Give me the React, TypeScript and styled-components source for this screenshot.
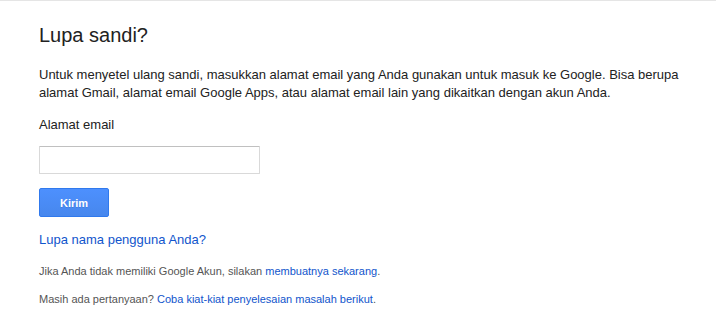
import React from "react";
import styled, { createGlobalStyle } from "styled-components";

const Global = createGlobalStyle`
  html, body { margin: 0; padding: 0; background: #fff; }
  body { font-family: Arial, "Liberation Sans", sans-serif; color: #222; }
`;

const Page = styled.div`
  border-top: 1px solid #e5e5e5;
  padding: 23px 0 0 39px;
  min-height: 334px;
  box-sizing: border-box;
`;

const Title = styled.h1`
  margin: 0;
  font-size: 20px;
  line-height: 23px;
  font-weight: normal;
  color: #222;
`;

const Lead = styled.p`
  margin: 19px 0 0;
  width: 650px;
  font-size: 13px;
  line-height: 18px;
  color: #222;
`;

const Label = styled.label`
  display: block;
  margin-top: 14px;
  font-size: 13px;
  line-height: 18px;
  color: #222;
`;

const Input = styled.input`
  display: block;
  box-sizing: border-box;
  margin-top: 12px;
  width: 221px;
  height: 28px;
  padding: 0 8px;
  border: 1px solid #d9d9d9;
  border-top-color: #c0c0c0;
  border-radius: 1px;
  font-size: 13px;
  font-family: inherit;
  outline: none;
`;

const Button = styled.button`
  display: block;
  box-sizing: border-box;
  margin-top: 14px;
  width: 70px;
  height: 29px;
  border: 1px solid #3079ed;
  border-radius: 2px;
  background: linear-gradient(#4d90fe, #4787ed);
  color: #fff;
  font-family: inherit;
  font-size: 11px;
  font-weight: bold;
  text-shadow: 0 1px rgba(0, 0, 0, 0.1);
  cursor: pointer;
`;

const BigLink = styled.a`
  display: block;
  margin-top: 14px;
  font-size: 13px;
  line-height: 18px;
  color: #15c;
  text-decoration: none;
`;

const Note = styled.p<{ $top: number }>`
  margin: ${(p) => p.$top}px 0 0;
  font-size: 11px;
  line-height: 15px;
  color: #555;
`;

const Link = styled.a`
  color: #15c;
  text-decoration: none;
`;

export default function App() {
  return (
    <>
      <Global />
      <Page>
        <Title>Lupa sandi?</Title>
        <Lead>
          Untuk menyetel ulang sandi, masukkan alamat email yang Anda gunakan untuk masuk ke Google. Bisa berupa
          alamat Gmail, alamat email Google Apps, atau alamat email lain yang dikaitkan dengan akun Anda.
        </Lead>
        <Label htmlFor="email">Alamat email</Label>
        <Input id="email" type="text" />
        <Button type="button">Kirim</Button>
        <BigLink href="#">Lupa nama pengguna Anda?</BigLink>
        <Note $top={15}>
          Jika Anda tidak memiliki Google Akun, silakan <Link href="#">membuatnya sekarang</Link>.
        </Note>
        <Note $top={13}>
          Masih ada pertanyaan? <Link href="#">Coba kiat-kiat penyelesaian masalah berikut</Link>.
        </Note>
      </Page>
    </>
  );
}
